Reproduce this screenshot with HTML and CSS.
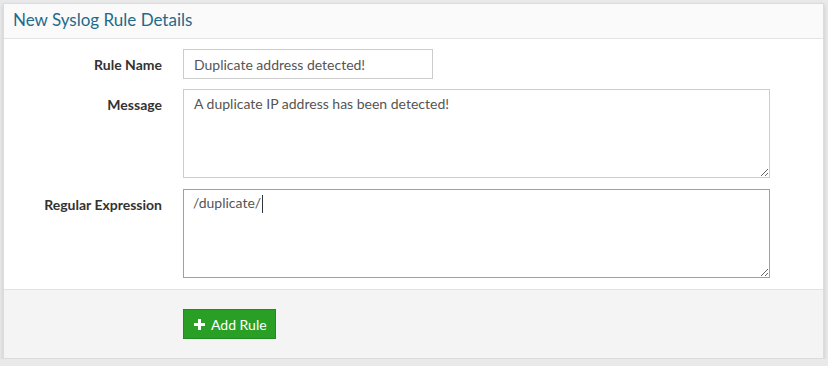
FILE: index.html
```html
<!DOCTYPE html>
<html lang="en">
<head>
<meta charset="UTF-8">
<title>New Syslog Rule</title>
<link rel="stylesheet" href="styles.css">
</head>
<body>

<div class="panel">
  <div class="panel-head">New Syslog Rule Details</div>

  <div class="panel-body">
    <div class="row">
      <label class="lbl">Rule Name</label>
      <input class="field short" type="text" value="Duplicate address detected!">
    </div>
    <div class="row">
      <label class="lbl">Message</label>
      <textarea class="field area">A duplicate IP address has been detected!</textarea>
    </div>
    <div class="row">
      <label class="lbl">Regular Expression</label>
      <div class="area-wrap">
        <textarea class="field area bare">/duplicate/</textarea>
        <span class="caret"></span>
      </div>
    </div>
  </div>

  <div class="panel-foot">
    <button class="btn-add">
      <svg width="11" height="11" viewBox="0 0 11 11"><path d="M4 0h3v4h4v3H7v4H4V7H0V4h4z" fill="#fff"/></svg>
      Add Rule
    </button>
  </div>
</div>

</body>
</html>
```

FILE: styles.css
```css
html,body{margin:0;background:#e9e9e9}
body{padding:3px 4px 0 3px;font-family:Lato,"Open Sans",sans-serif;font-size:14px;color:#333}
.panel{background:#fff;border:1px solid #dcdcdc;box-shadow:0 2px 4px rgba(0,0,0,.15)}
.panel-head{background:#fafafa;border-bottom:1px solid #e3e3e3;height:34px;line-height:32px;padding-left:9px;font-size:17px;color:#1e6a8a}
.panel-body{padding:10px 0 11px}
.row{display:grid;grid-template-columns:158px 1fr;column-gap:21px;margin-bottom:10px}
.row:nth-child(2){margin-bottom:11px}
.row:last-child{margin-bottom:0}
.lbl{text-align:right;font-weight:bold;padding-top:6px;line-height:20px}
.field{box-sizing:border-box;border:1px solid #cccccc;border-radius:0;font-family:inherit;font-size:14px;color:#555;padding:5px 10px;margin:0;outline:none;background:#fff}
.short{width:250px;height:30px}
.area{display:block;width:587px;height:89px;resize:vertical;line-height:20px;padding-top:4px}
.area-wrap{position:relative;box-sizing:border-box;width:587px;border:1px solid #66b0e8}
.area-wrap .bare{border:0;width:585px;height:87px;padding:3px 9px 5px}
.caret{position:absolute;left:78px;top:5px;width:1px;height:18px;background:#333}
.panel-foot{background:#f4f4f4;border-top:1px solid #e3e3e3;padding:19px 0 19px 179px}
.btn-add{display:flex;align-items:center;gap:6px;height:30px;padding:0 8px 0 10px;background:#299f26;border:1px solid #1f8a1d;color:#fff;font-family:inherit;font-size:14px;border-radius:0}
```
